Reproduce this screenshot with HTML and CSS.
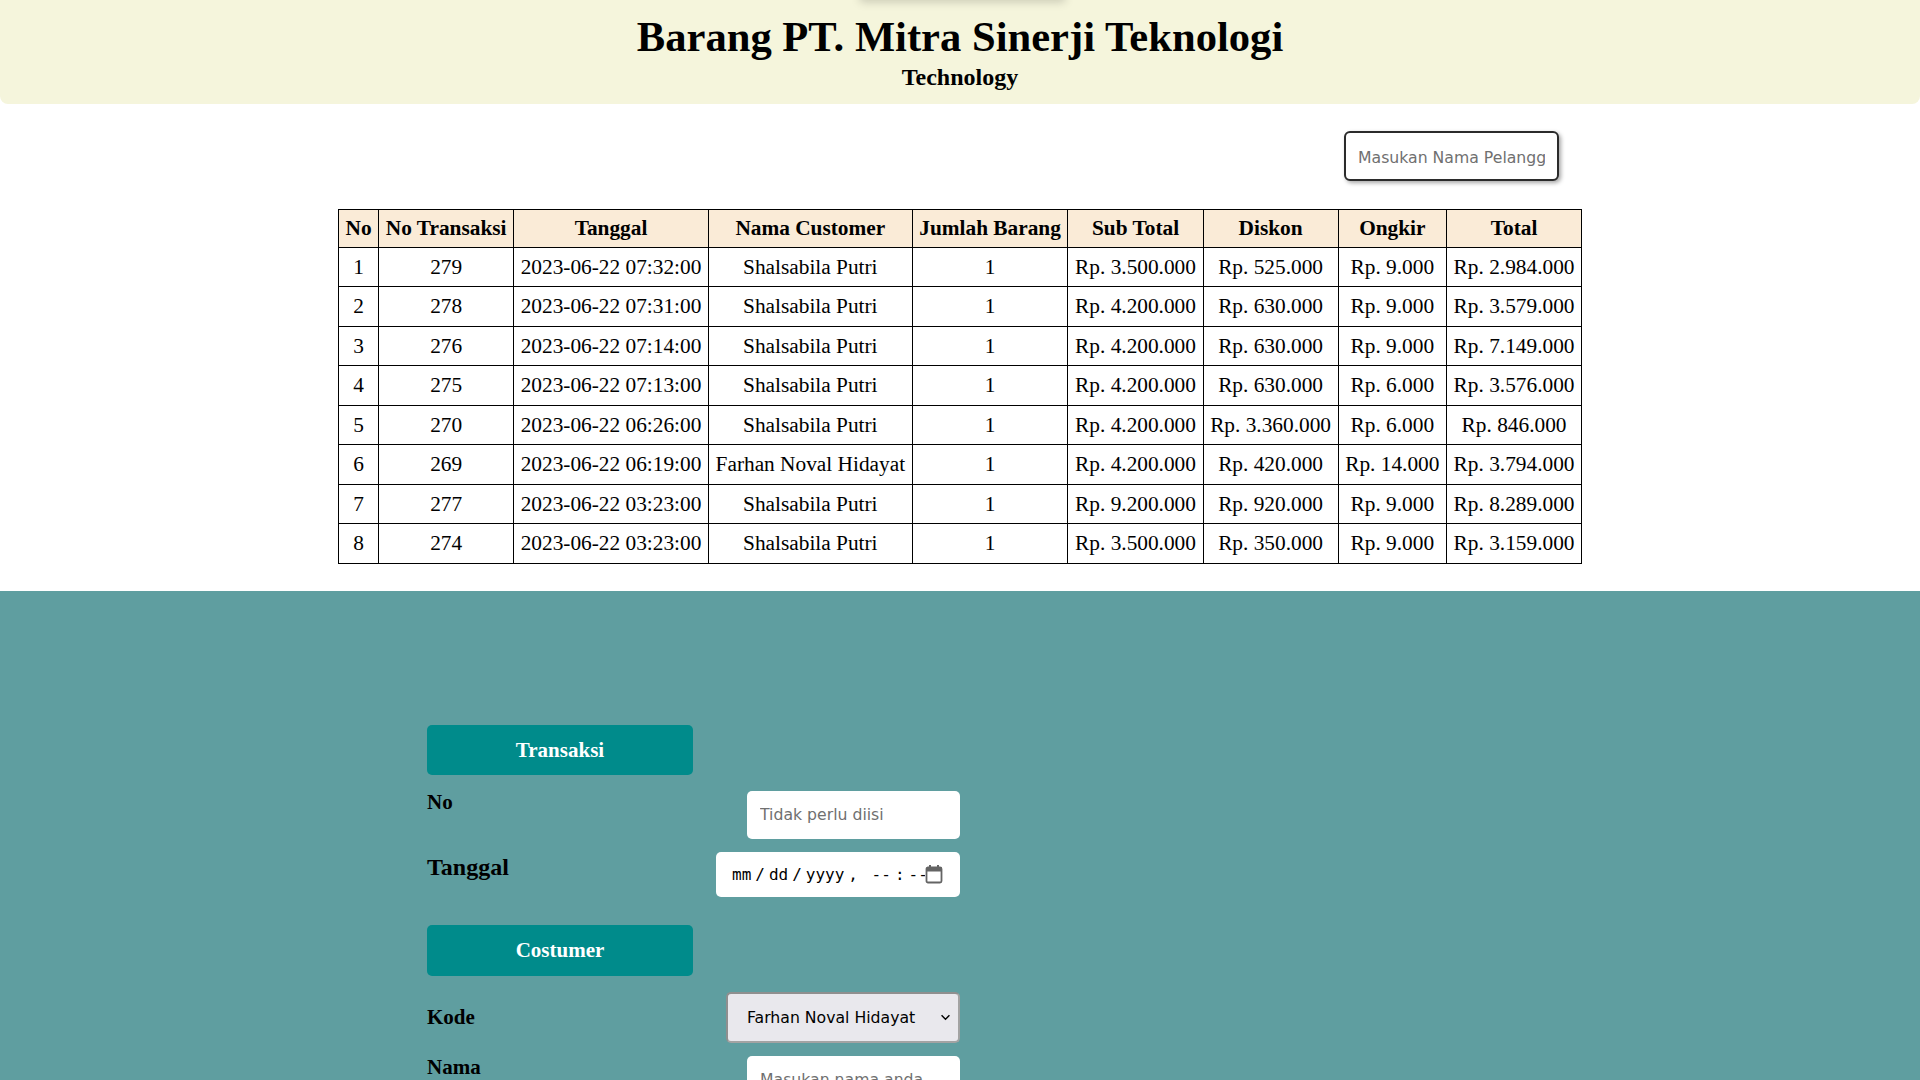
FILE: index.html
```html
<!DOCTYPE html>
<html lang="id">
<head>
<meta charset="utf-8">
<title>Barang PT. Mitra Sinerji Teknologi</title>
<link rel="stylesheet" href="styles.css">
</head>
<body>
<header class="site-header">
  <h1 class="title">Barang PT. Mitra Sinerji Teknologi</h1>
  <h2 class="subtitle">Technology</h2>
</header>

<main class="list">
  <div class="search-row">
    <input class="search" type="text" placeholder="Masukan Nama Pelanggan">
  </div>
  <table class="trx">
    <thead>
      <tr><th>No</th><th>No Transaksi</th><th>Tanggal</th><th>Nama Customer</th><th>Jumlah Barang</th><th>Sub Total</th><th>Diskon</th><th>Ongkir</th><th>Total</th></tr>
    </thead>
    <tbody>
      <tr><td>1</td><td>279</td><td>2023-06-22 07:32:00</td><td>Shalsabila Putri</td><td>1</td><td>Rp. 3.500.000</td><td>Rp. 525.000</td><td>Rp. 9.000</td><td>Rp. 2.984.000</td></tr>
      <tr><td>2</td><td>278</td><td>2023-06-22 07:31:00</td><td>Shalsabila Putri</td><td>1</td><td>Rp. 4.200.000</td><td>Rp. 630.000</td><td>Rp. 9.000</td><td>Rp. 3.579.000</td></tr>
      <tr><td>3</td><td>276</td><td>2023-06-22 07:14:00</td><td>Shalsabila Putri</td><td>1</td><td>Rp. 4.200.000</td><td>Rp. 630.000</td><td>Rp. 9.000</td><td>Rp. 7.149.000</td></tr>
      <tr><td>4</td><td>275</td><td>2023-06-22 07:13:00</td><td>Shalsabila Putri</td><td>1</td><td>Rp. 4.200.000</td><td>Rp. 630.000</td><td>Rp. 6.000</td><td>Rp. 3.576.000</td></tr>
      <tr><td>5</td><td>270</td><td>2023-06-22 06:26:00</td><td>Shalsabila Putri</td><td>1</td><td>Rp. 4.200.000</td><td>Rp. 3.360.000</td><td>Rp. 6.000</td><td>Rp. 846.000</td></tr>
      <tr><td>6</td><td>269</td><td>2023-06-22 06:19:00</td><td>Farhan Noval Hidayat</td><td>1</td><td>Rp. 4.200.000</td><td>Rp. 420.000</td><td>Rp. 14.000</td><td>Rp. 3.794.000</td></tr>
      <tr><td>7</td><td>277</td><td>2023-06-22 03:23:00</td><td>Shalsabila Putri</td><td>1</td><td>Rp. 9.200.000</td><td>Rp. 920.000</td><td>Rp. 9.000</td><td>Rp. 8.289.000</td></tr>
      <tr><td>8</td><td>274</td><td>2023-06-22 03:23:00</td><td>Shalsabila Putri</td><td>1</td><td>Rp. 3.500.000</td><td>Rp. 350.000</td><td>Rp. 9.000</td><td>Rp. 3.159.000</td></tr>
    </tbody>
  </table>
</main>

<section class="form-area">
  <div class="form">
    <div class="section-title">Transaksi</div>
    <div class="row">
      <label class="lbl">No</label>
      <input class="field text" type="text" placeholder="Tidak perlu diisi">
    </div>
    <div class="row">
      <label class="lbl lbl-lg">Tanggal</label>
      <input class="field date" type="datetime-local">
    </div>
    <div class="section-title section-gap">Costumer</div>
    <div class="row row-center">
      <label class="lbl">Kode</label>
      <select class="field sel"><option>Farhan Noval Hidayat</option><option>Shalsabila Putri</option></select>
    </div>
    <div class="row row-tight">
      <label class="lbl">Nama</label>
      <input class="field text" type="text" placeholder="Masukan nama anda">
    </div>
  </div>
</section>
</body>
</html>
```

FILE: styles.css
```css
* { box-sizing: border-box; }

html, body {
  margin: 0;
  padding: 0;
  background: #ffffff;
  font-family: "Liberation Serif", "Times New Roman", serif;
  color: #000;
}

.site-header {
  position: relative;
  background: #f5f5dc;
  border-radius: 0 0 8px 8px;
  padding: 13px 0 13px;
  text-align: center;
}

.site-header::before {
  content: "";
  position: absolute;
  top: -12px;
  left: 860px;
  width: 205px;
  height: 12px;
  box-shadow: 0 2px 10px rgba(0, 0, 0, 0.18);
}

.title {
  margin: 0;
  font-size: 42.6px;
  line-height: 48px;
  font-weight: bold;
}

.subtitle {
  margin: 2px 0 0;
  font-size: 24px;
  line-height: 28px;
  font-weight: bold;
}

.list {
  padding: 27px 0 27px;
}

.search-row {
  display: flex;
  justify-content: flex-end;
  padding-right: 361px;
}

.search {
  width: 215px;
  height: 50px;
  border: 2px solid #2b2b2b;
  border-radius: 6px;
  box-shadow: 2px 2px 4px rgba(0, 0, 0, 0.35);
  padding: 2px 12px 0;
  font-family: "DejaVu Sans", Verdana, sans-serif;
  font-size: 15.7px;
  color: #333;
  background: #fff;
  outline: none;
}

.search::placeholder,
.text::placeholder {
  color: #707070;
}

.trx {
  margin: 28px auto 0;
  border-collapse: collapse;
  font-size: 21.33px;
}

.trx th,
.trx td {
  border: 1px solid #000;
  padding: 7px 6.6px;
  text-align: center;
  white-space: nowrap;
  line-height: 24.5px;
}

.trx th {
  background: #faebd7;
  font-weight: bold;
  padding-top: 6px;
  padding-bottom: 6px;
}

.form-area {
  background: #5f9ea0;
  padding: 134px 0 120px;
  min-height: 500px;
}

.form {
  width: 533px;
  margin-left: 427px;
}

.section-title {
  width: 266px;
  height: 50px;
  line-height: 50px;
  background: #008b8b;
  border-radius: 5px;
  color: #ffffff;
  font-weight: bold;
  font-size: 21px;
  text-align: center;
}

.section-gap {
  margin-top: 28px;
  height: 51px;
  line-height: 51px;
}

.row {
  display: flex;
  justify-content: space-between;
  align-items: flex-start;
  margin-top: 16px;
}

.row + .row {
  margin-top: 13px;
}

.row-center {
  align-items: center;
}

.lbl {
  font-weight: bold;
  font-size: 21px;
  line-height: 22px;
}

.lbl-lg {
  font-size: 24px;
  line-height: 28px;
  margin-top: 1px;
}

.field {
  font-family: "DejaVu Sans", Verdana, sans-serif;
  font-size: 15.7px;
  border-radius: 5px;
  outline: none;
}

.text {
  width: 213px;
  height: 48px;
  border: none;
  background: #fff;
  padding: 0 13px;
  color: #333;
}

.date {
  width: 244px;
  height: 45px;
  border: none;
  background: #fff;
  padding: 0 17px 0 13px;
  font-family: "DejaVu Sans Mono", "Liberation Mono", monospace;
  font-size: 16px;
  color: #000;
}

.date::-webkit-datetime-edit-month-field,
.date::-webkit-datetime-edit-day-field,
.date::-webkit-datetime-edit-year-field,
.date::-webkit-datetime-edit-hour-field,
.date::-webkit-datetime-edit-minute-field,
.date::-webkit-datetime-edit-ampm-field {
  padding: 0 3px;
}

.date::-webkit-datetime-edit-text {
  padding: 0 1px;
}

.date::-webkit-calendar-picker-indicator {
  width: 18px;
  height: 20px;
  padding: 0;
  margin: 0 0 0 -6px;
  background: #fff url("data:image/svg+xml;utf8,<svg xmlns='http://www.w3.org/2000/svg' viewBox='0 0 18 20'><rect x='1.5' y='3.5' width='15' height='15' rx='1.5' fill='none' stroke='%23646464' stroke-width='1.8'/><rect x='1.5' y='3.5' width='15' height='4' fill='%23646464'/><rect x='4' y='1' width='2' height='4' fill='%23646464'/><rect x='12' y='1' width='2' height='4' fill='%23646464'/></svg>") no-repeat center / 18px 20px;
  opacity: 1;
}

.sel {
  width: 234px;
  height: 51px;
  appearance: none;
  -webkit-appearance: none;
  background: #e9e8ed url("data:image/svg+xml;utf8,<svg xmlns='http://www.w3.org/2000/svg' viewBox='0 0 12 8'><path d='M1.5 1.5 L6 6 L10.5 1.5' fill='none' stroke='%23000' stroke-width='1.6'/></svg>") no-repeat right 7px center / 11px 7px;
  border: 2px solid #a3a3a3;
  border-top-color: #8f8f8f;
  border-left-color: #8f8f8f;
  border-radius: 5px;
  padding: 0 10px 0 19px;
  color: #000;
}
```
